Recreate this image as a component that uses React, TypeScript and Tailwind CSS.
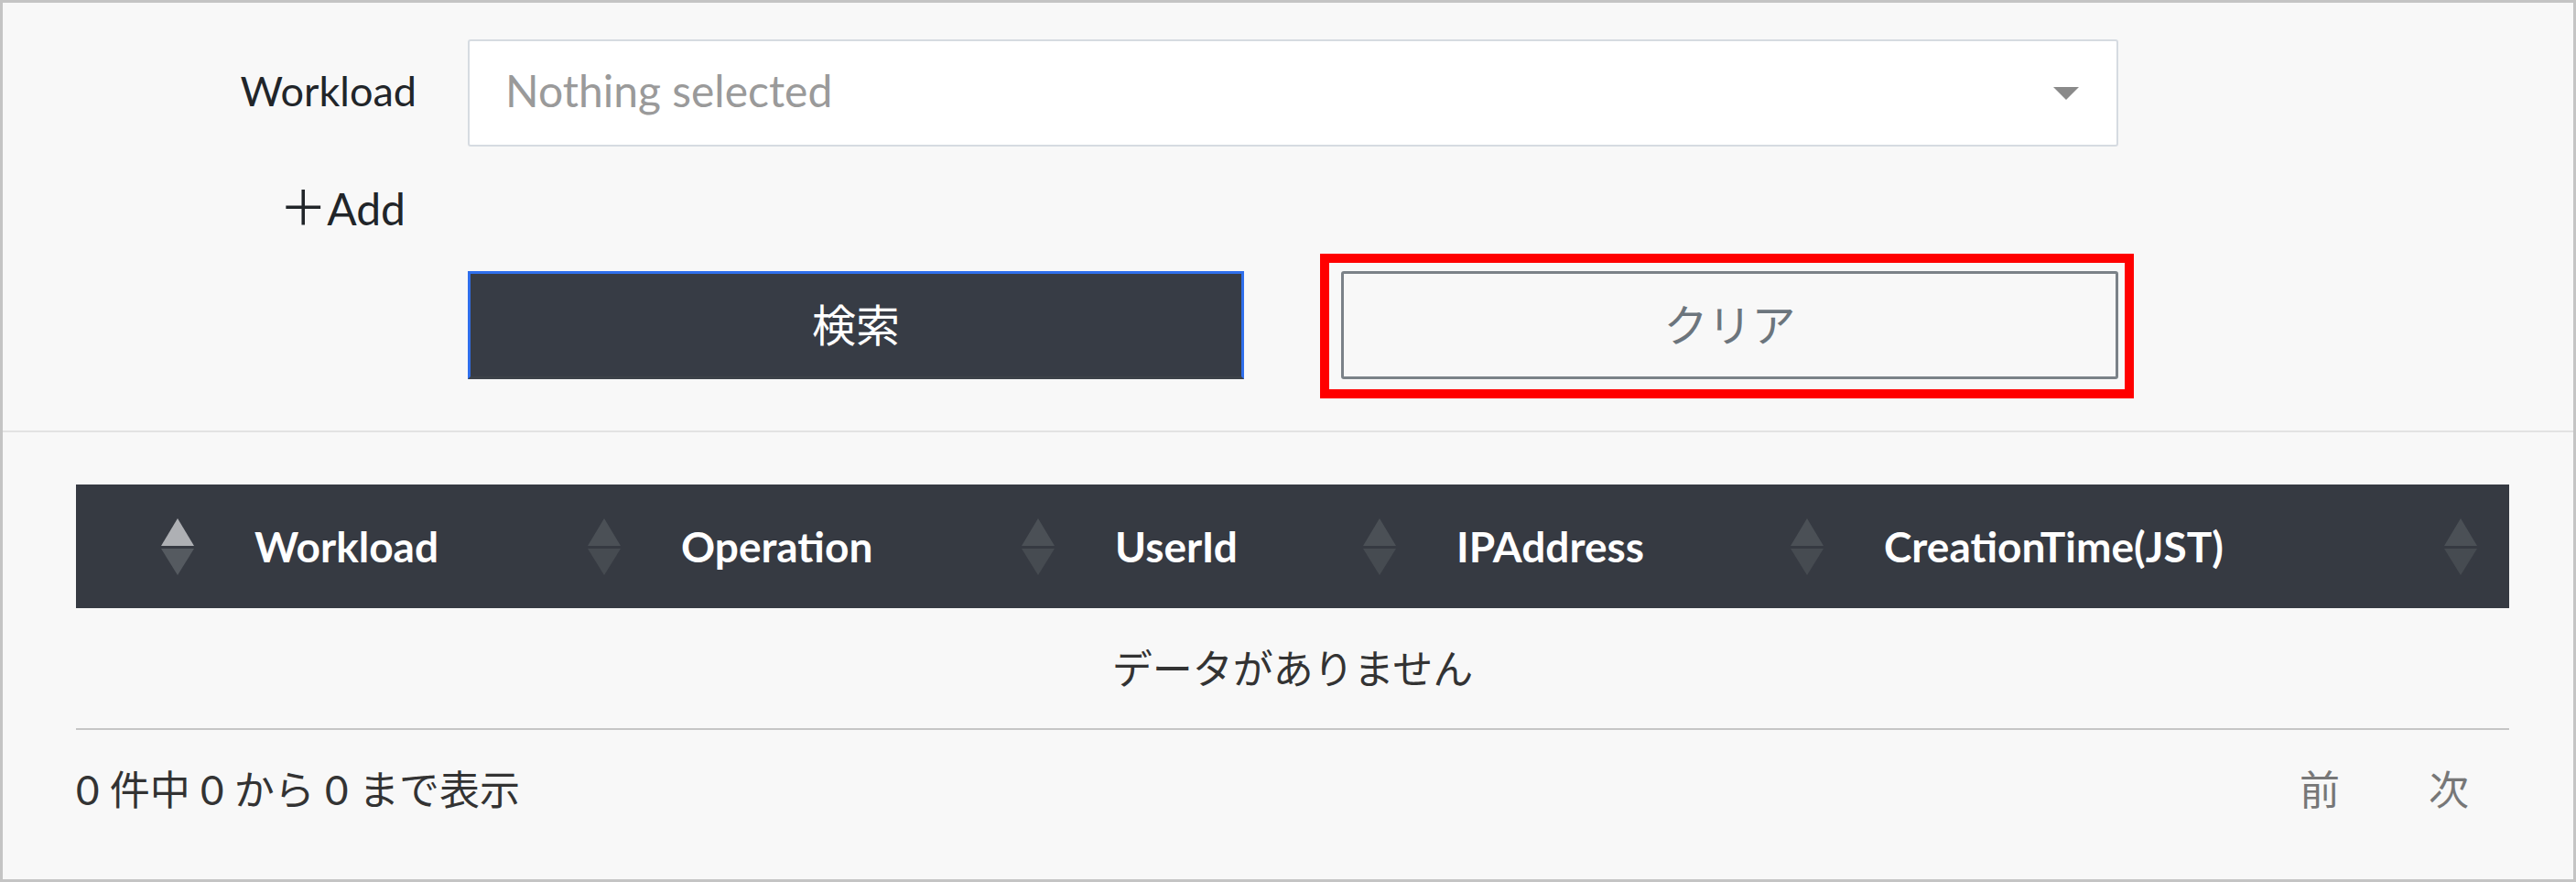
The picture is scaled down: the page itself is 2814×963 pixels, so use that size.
import React from "react";

function SortIcon({ active = false }: { active?: boolean }) {
  return (
    <svg width="36" height="62" viewBox="0 0 36 62" className="shrink-0">
      <polygon points="18,0 36,30 0,30" fill={active ? "#aeb0b4" : "#4b5056"} />
      <polygon points="0,33 36,33 18,62" fill={active ? "#555a60" : "#464b51"} />
    </svg>
  );
}

const cols = [
  { label: "", w: "w-[164px]", active: true },
  { label: "Workload", w: "w-[466px]" },
  { label: "Operation", w: "w-[474px]" },
  { label: "UserId", w: "w-[373px]" },
  { label: "IPAddress", w: "w-[467px]" },
  { label: "CreationTime(JST)", w: "w-[714px]" },
];

export default function App() {
  return (
    <div className="w-[2814px] h-[963px] bg-[#f8f8f8] border-[3px] border-[#c4c4c4] font-['Lato','Noto_Sans_CJK_JP',sans-serif] text-[#212529] flex flex-col">
      {/* search form */}
      <div className="h-[469px] border-b-2 border-[#e3e3e3] pt-[40px] shrink-0">
        <div className="flex items-center">
          <div className="w-[452px] text-right text-[45px] leading-[58px] pb-[6px]">Workload</div>
          <div className="ml-[56px] w-[1803px] h-[117px] bg-white border-2 border-[#d6dbe1] rounded-[3px] flex items-center justify-between pl-[39px] pr-[41px]">
            <span className="text-[48px] leading-[58px] text-[#9a9a9a] pb-[5px]">Nothing selected</span>
            <svg width="28" height="14" viewBox="0 0 28 14">
              <polygon points="0,0 28,0 14,14" fill="#8a8a8a" />
            </svg>
          </div>
        </div>
        <div className="flex mt-[37px]">
          <div className="w-[452px] text-right pr-[12px] text-[48px] leading-[58px]">
            <span className="text-[52px]">＋</span>Add
          </div>
        </div>
        <div className="flex mt-[39px]">
          <div className="w-[452px]" />
          <button className="ml-[56px] w-[848px] h-[118px] bg-[#373c45] border-[3px] border-[#2f6fec] border-b-[#3d4249] text-white text-[48px] flex items-center justify-center">
            検索
          </button>
          <div className="relative ml-[106px]">
            <button className="w-[849px] h-[118px] border-[3px] border-[#7b8288] rounded-[3px] text-[#6c757d] text-[48px] flex items-center justify-center bg-[#f8f8f8]">
              クリア
            </button>
            <div className="absolute -left-[23px] -top-[19px] -right-[17px] -bottom-[21px] border-[10px] border-[#ff0000] pointer-events-none" />
          </div>
        </div>
      </div>

      {/* table */}
      <div className="ml-[80px] mt-[57px] w-[2658px]">
        <div className="flex h-[135px] bg-[#363a42] text-white font-bold text-[46px]">
          {cols.map((c, i) => (
            <div
              key={i}
              className={`${c.w} flex items-center ${c.label ? "justify-between" : "justify-end"} pl-[31px] pr-[35px]`}
            >
              {c.label ? <span className="leading-[58px]">{c.label}</span> : null}
              <SortIcon active={c.active} />
            </div>
          ))}
        </div>
        <div className="h-[133px] border-b-2 border-[#c6c6c6] flex items-center justify-center text-[44px] text-[#333]">
          データがありません
        </div>
        <div className="h-[130px] flex items-center justify-between text-[44px]">
          <span className="text-[#333]">0 件中 0 から 0 まで表示</span>
          <div className="flex gap-[97px] pr-[44px] text-[#777]">
            <span>前</span>
            <span>次</span>
          </div>
        </div>
      </div>
    </div>
  );
}
